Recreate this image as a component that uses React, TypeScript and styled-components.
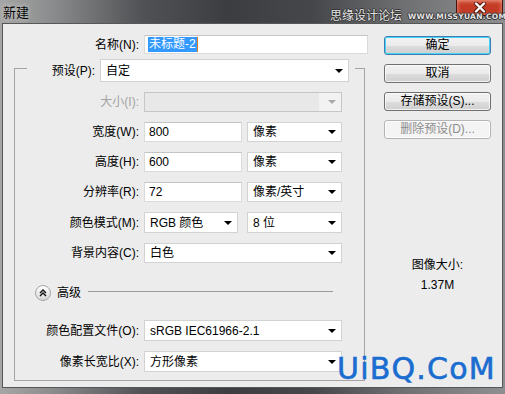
import React from "react";
import styled, { createGlobalStyle } from "styled-components";

const GlobalStyle = createGlobalStyle`
  html, body {
    margin: 0;
    padding: 0;
  }
  body {
    font-family: "Liberation Sans", "Noto Sans CJK SC", sans-serif;
    font-size: 12px;
    color: #000;
  }
`;

const Window = styled.div`
  position: relative;
  width: 505px;
  height: 394px;
  box-sizing: border-box;
  padding: 0 2px 6px 2px;
  display: flex;
  flex-direction: column;
  overflow: hidden;
  background: linear-gradient(
    90deg,
    #a6a6a6 0%,
    #8c8d8e 10%,
    #505255 28%,
    #3b3d40 45%,
    #45474a 62%,
    #6f7072 80%,
    #8e8f90 100%
  );
`;

const TitleBar = styled.div`
  height: 23px;
  flex: none;
  display: flex;
  justify-content: space-between;
  align-items: flex-start;
`;

const Title = styled.div`
  margin: 5px 0 0 1px;
  font-family: "Noto Sans CJK SC", sans-serif;
  font-size: 13px;
  line-height: 14px;
  color: #050505;
  text-shadow: 0 0 5px rgba(255, 255, 255, 0.7);
`;

const CloseButton = styled.div`
  flex: none;
  width: 47px;
  height: 16px;
  box-sizing: border-box;
  border: 1px solid #4a1510;
  border-top: none;
  border-radius: 0 0 4px 4px;
  background: #c43b25;
  box-shadow: inset 0 1px 4px rgba(255, 190, 170, 0.8);
  display: flex;
  align-items: center;
  justify-content: center;
`;

const SiteStamp = styled.div`
  position: absolute;
  top: 7px;
  left: 330px;
  display: flex;
  align-items: center;
  gap: 6px;
  color: #e4e4e4;
  text-shadow: 1px 0 0 #333, -1px 0 0 #333, 0 1px 0 #333, 0 -1px 0 #333;
  white-space: nowrap;
  pointer-events: none;
`;

const StampCn = styled.span`
  font-family: "Noto Sans CJK SC", sans-serif;
  font-size: 12px;
  line-height: 16px;
`;

const StampEn = styled.span`
  font-family: "DejaVu Sans", sans-serif;
  font-size: 7.5px;
  font-weight: bold;
  letter-spacing: 0.3px;
  margin-top: 3px;
`;

const Client = styled.div`
  flex: 1;
  display: flex;
  background: #ececec;
  border: 1px solid #575757;
`;

const LeftCol = styled.div`
  width: 366px;
  flex: none;
  padding-top: 11px;
  display: flex;
  flex-direction: column;
`;

const Row = styled.div<{ $label: number; $height?: number }>`
  display: grid;
  grid-template-columns: ${({ $label }) => $label}px auto;
  column-gap: 5px;
  align-items: center;
  height: ${({ $height }) => $height ?? 20}px;
`;

const Label = styled.div<{ $disabled?: boolean }>`
  text-align: right;
  white-space: nowrap;
  line-height: 16px;
  color: ${({ $disabled }) => ($disabled ? "#a3a3a3" : "#000")};
`;

const Fields = styled.div`
  display: flex;
  justify-content: space-between;
  width: 198px;
`;

const TextInput = styled.div<{ $width: number; $height?: number }>`
  width: ${({ $width }) => $width}px;
  height: ${({ $height }) => $height ?? 20}px;
  box-sizing: border-box;
  background: #fff;
  border: 1px solid #dadada;
  border-top-color: #c4c4c4;
  padding-left: 4px;
  display: flex;
  align-items: center;
  line-height: 16px;
  white-space: nowrap;
`;

const Selected = styled.span`
  background: #3399ff;
  color: #fff;
  padding: 0 1px;
  margin-left: -1px;
  line-height: 15px;
  border-right: 1px solid #e07b1a;
`;

const SelectBox = styled.div<{ $width: number; $height?: number; $disabled?: boolean }>`
  width: ${({ $width }) => $width}px;
  height: ${({ $height }) => $height ?? 20}px;
  box-sizing: border-box;
  border: 1px solid ${({ $disabled }) => ($disabled ? "#c6c6c6" : "#d2d2d2")};
  background: ${({ $disabled }) =>
    $disabled ? "linear-gradient(90deg, #e8e8e8 0, #e8e8e8 89%, #f2f2f2 89%)" : "#fff"};
  display: flex;
  align-items: center;
  padding: 0 5px 0 5px;
  line-height: 16px;
  white-space: nowrap;
`;

const SelectValue = styled.span`
  flex: 1;
`;

const Arrow = styled.span<{ $disabled?: boolean }>`
  width: 0;
  height: 0;
  border-left: 4px solid transparent;
  border-right: 4px solid transparent;
  border-top: 4px solid ${({ $disabled }) => ($disabled ? "#a9a9a9" : "#000")};
`;

const GroupBox = styled.div`
  margin: 14px 0 0 11px;
  width: 351px;
  box-sizing: border-box;
  border: 1px solid #a4a4a4;
  padding-bottom: 8px;
  display: flex;
  flex-direction: column;
  gap: 10px;
`;

const GroupHeader = styled.div`
  margin: -10px 9px 0 12px;
  height: 23px;
  padding-right: 6px;
  background: #ececec;
  display: flex;
  align-items: center;
  justify-content: flex-end;
  gap: 5px;
`;

const AdvancedRow = styled.div`
  height: 20px;
  margin: 10px 0 7px;
  display: grid;
  grid-template-columns: 16px auto 1fr;
  align-items: center;
  padding: 0 31px 0 20px;
  column-gap: 6px;
`;

const AdvancedText = styled.span`
  line-height: 16px;
`;

const Divider = styled.hr`
  display: block;
  height: 1px;
  margin: -3px 0 0 1px;
  border: none;
  background: #9a9a9a;
`;

const RightCol = styled.div`
  margin-left: 15px;
  width: 107px;
  padding-top: 12px;
  display: flex;
  flex-direction: column;
  gap: 9px;
`;

const Button = styled.div<{ $default?: boolean; $disabled?: boolean }>`
  height: 19px;
  box-sizing: border-box;
  border-radius: 3px;
  border: 1px solid
    ${({ $default, $disabled }) => ($disabled ? "#b5b5b5" : $default ? "#3c7fb1" : "#707070")};
  background: ${({ $disabled }) =>
    $disabled
      ? "#f4f4f4"
      : "linear-gradient(180deg, #f2f2f2 0%, #ebebeb 50%, #dddddd 51%, #cfcfcf 100%)"};
  box-shadow: ${({ $default }) =>
    $default ? "inset 0 0 0 1px #48d3fb" : "inset 0 0 0 1px rgba(255,255,255,0.7)"};
  color: ${({ $disabled }) => ($disabled ? "#8d8d8d" : "#000")};
  display: flex;
  align-items: center;
  justify-content: center;
  line-height: 15px;
  white-space: nowrap;
`;

const InfoLabel = styled.div`
  margin-top: 109px;
  text-align: center;
  line-height: 16px;
`;

const InfoValue = styled.div`
  margin-top: -5px;
  text-align: center;
  line-height: 16px;
`;

const SiteMark = styled.div`
  position: absolute;
  left: 337px;
  top: 354px;
  font-family: "DejaVu Sans", sans-serif;
  font-size: 30px;
  line-height: 30px;
  letter-spacing: 1.2px;
  color: #1a6dd0;
  -webkit-text-stroke: 0.6px #1a6dd0;
  white-space: nowrap;
`;

function Select({
  value,
  width,
  height,
  disabled,
}: {
  value?: string;
  width: number;
  height?: number;
  disabled?: boolean;
}) {
  return (
    <SelectBox $width={width} $height={height} $disabled={disabled}>
      <SelectValue>{value}</SelectValue>
      <Arrow $disabled={disabled} />
    </SelectBox>
  );
}

function ExpandIcon() {
  return (
    <svg width="16" height="16" viewBox="0 0 16 16">
      <defs>
        <linearGradient id="cb" x1="0" y1="0" x2="0" y2="1">
          <stop offset="0" stopColor="#ffffff" />
          <stop offset="1" stopColor="#d6d6d6" />
        </linearGradient>
      </defs>
      <circle cx="8" cy="8" r="7.5" fill="url(#cb)" stroke="#a6a6a6" />
      <path d="M5 8 L8 5 L11 8 M5 11 L8 8 L11 11" fill="none" stroke="#111" strokeWidth="1.4" />
    </svg>
  );
}

export default function App() {
  return (
    <>
      <GlobalStyle />
      <Window>
        <TitleBar>
          <Title>新建</Title>
          <CloseButton>
            <svg width="14" height="11" viewBox="0 0 14 11">
              <path d="M3 1.5 L11 9.5 M11 1.5 L3 9.5" stroke="#4a1510" strokeWidth="4" strokeLinecap="round" />
              <path d="M3 1.5 L11 9.5 M11 1.5 L3 9.5" stroke="#fff" strokeWidth="2.4" strokeLinecap="round" />
            </svg>
          </CloseButton>
        </TitleBar>
        <SiteStamp>
          <StampCn>思缘设计论坛</StampCn>
          <StampEn>WWW.MISSYUAN.COM</StampEn>
        </SiteStamp>
        <Client>
          <LeftCol>
            <Row $label={136} $height={19}>
              <Label>名称(N):</Label>
              <TextInput $width={224} $height={19}>
                <Selected>未标题-2</Selected>
              </TextInput>
            </Row>
            <GroupBox>
              <GroupHeader>
                <Label>预设(P):</Label>
                <Select value="自定" width={249} height={23} />
              </GroupHeader>
              <Row $label={124}>
                <Label $disabled>大小(I):</Label>
                <Select width={198} disabled />
              </Row>
              <Row $label={124}>
                <Label>宽度(W):</Label>
                <Fields>
                  <TextInput $width={98}>800</TextInput>
                  <Select value="像素" width={95} />
                </Fields>
              </Row>
              <Row $label={124}>
                <Label>高度(H):</Label>
                <Fields>
                  <TextInput $width={98}>600</TextInput>
                  <Select value="像素" width={95} />
                </Fields>
              </Row>
              <Row $label={124}>
                <Label>分辨率(R):</Label>
                <Fields>
                  <TextInput $width={98}>72</TextInput>
                  <Select value="像素/英寸" width={95} />
                </Fields>
              </Row>
              <Row $label={124} $height={21}>
                <Label>颜色模式(M):</Label>
                <Fields>
                  <Select value="RGB 颜色" width={94} height={21} />
                  <Select value="8 位" width={95} height={21} />
                </Fields>
              </Row>
              <Row $label={124}>
                <Label>背景内容(C):</Label>
                <Select value="白色" width={198} />
              </Row>
              <AdvancedRow>
                <ExpandIcon />
                <AdvancedText>高级</AdvancedText>
                <Divider />
              </AdvancedRow>
              <Row $label={124} $height={21}>
                <Label>颜色配置文件(O):</Label>
                <Select value="sRGB IEC61966-2.1" width={198} height={21} />
              </Row>
              <Row $label={124} $height={21}>
                <Label>像素长宽比(X):</Label>
                <Select value="方形像素" width={198} height={21} />
              </Row>
            </GroupBox>
          </LeftCol>
          <RightCol>
            <Button $default>确定</Button>
            <Button>取消</Button>
            <Button>存储预设(S)...</Button>
            <Button $disabled>删除预设(D)...</Button>
            <InfoLabel>图像大小:</InfoLabel>
            <InfoValue>1.37M</InfoValue>
          </RightCol>
        </Client>
        <SiteMark>UiBQ.CoM</SiteMark>
      </Window>
    </>
  );
}
